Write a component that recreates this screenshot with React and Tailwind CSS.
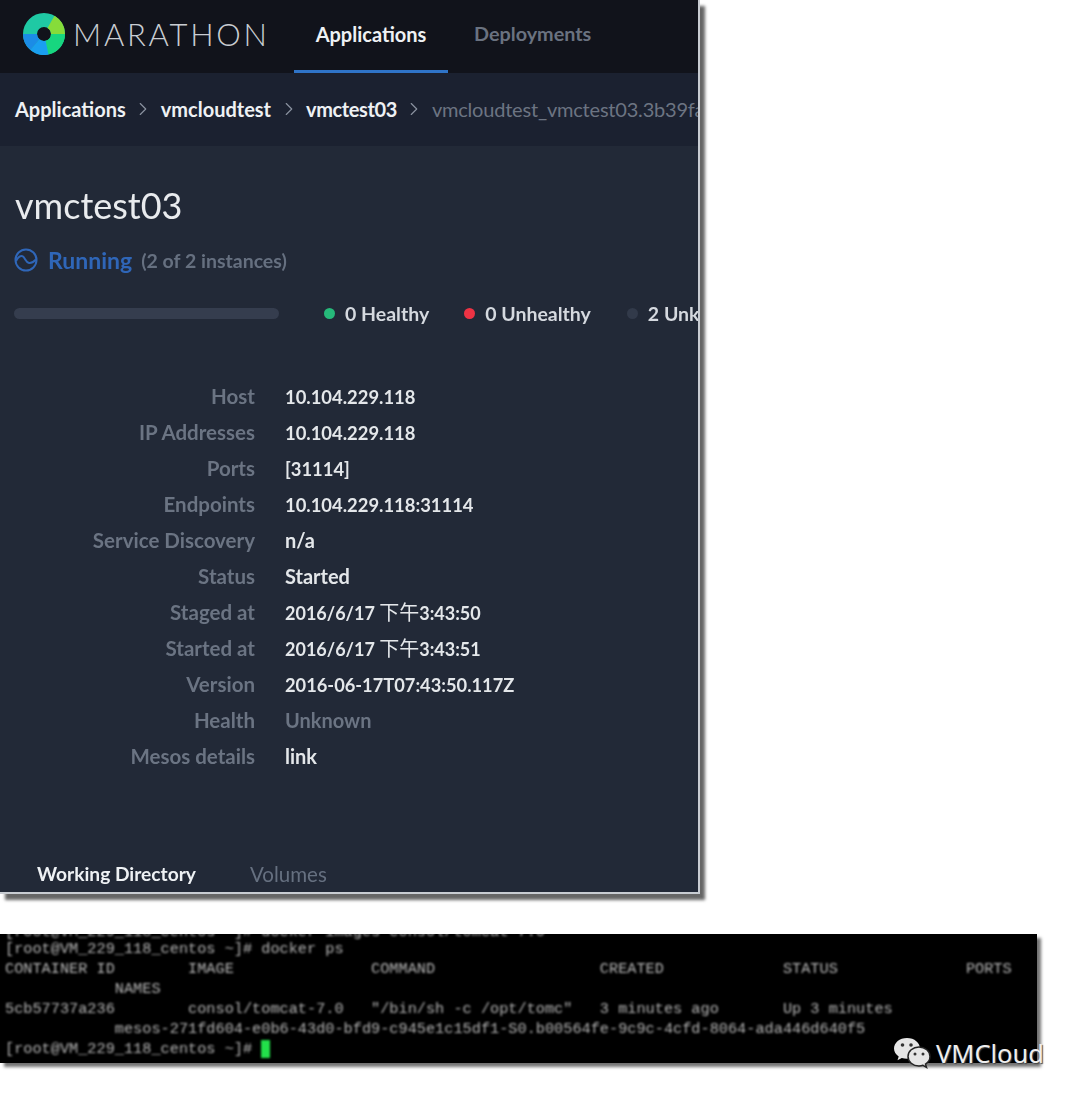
import { ChevronRight } from "lucide-react";

const sans = "font-['Lato','Noto_Sans_CJK_SC',sans-serif]";

function Stamp({ day, time }) {
  return (
    <span className="text-[18px]">
      {day} <span className="text-[20px] font-normal">下午</span>
      {time}
    </span>
  );
}

const details = [
  ["Host", <span className="text-[18.400px]">10.104.229.118</span>],
  ["IP Addresses", <span className="text-[18.400px]">10.104.229.118</span>],
  ["Ports", <span className="text-[18.400px]">[31114]</span>],
  ["Endpoints", <span className="text-[18.400px]">10.104.229.118:31114</span>],
  ["Service Discovery", "n/a"],
  ["Status", "Started"],
  ["Staged at", <Stamp day="2016/6/17" time="3:43:50" />],
  ["Started at", <Stamp day="2016/6/17" time="3:43:51" />],
  ["Version", <span className="text-[18.250px]">2016-06-17T07:43:50.117Z</span>],
  ["Health", "Unknown"],
  ["Mesos details", "link"],
];

const terminal = [
  "[root@VM_229_118_centos ~]# docker ps",
  "CONTAINER ID        IMAGE               COMMAND                  CREATED             STATUS              PORTS",
  "            NAMES",
  '5cb57737a236        consol/tomcat-7.0   "/bin/sh -c /opt/tomc"   3 minutes ago       Up 3 minutes',
  "            mesos-271fd604-e0b6-43d0-bfd9-c945e1c15df1-S0.b00564fe-9c9c-4cfd-8064-ada446d640f5",
];

function Logo() {
  return (
    <svg width="42" height="42" viewBox="0 0 42 42" fill="none" strokeWidth="14">
      <circle cx="21" cy="21" r="14" stroke="#1fc9a4" />
      <path d="M28 8.9A14 14 0 0 1 35 21" stroke="#86dc3a" />
      <path d="M35 21A14 14 0 0 1 24 34.7" stroke="#17d67f" />
      <path d="M24 34.7A14 14 0 0 1 12 31.7" stroke="#1a9ff0" />
      <path d="M12 31.7A14 14 0 0 1 7 21" stroke="#1b8ce6" />
    </svg>
  );
}

function RunningIcon() {
  return (
    <svg width="24" height="24" viewBox="0 0 24 24" fill="none" stroke="#2f66b8" strokeWidth="2">
      <circle cx="12" cy="12" r="10.5" />
      <path d="M2 13c2-4 5-6 7-4.500s3 6 6 6.500 5-1.500 7-3.500" />
    </svg>
  );
}

function WeChat() {
  return (
    <svg width="38" height="32" viewBox="0 0 38 32" fill="#e6e6e6">
      <path d="M14 1C6.500 1 1 5.800 1 11.500c0 3.300 1.800 6 4.700 8l-1.200 3.700 4.300-2.200c1.700.5 3.500.8 5.200.8 7.500 0 13-4.800 13-10.300S21.500 1 14 1z" />
      <path d="M26 10c-6.200 0-11 4.300-11 9.500S19.800 29 26 29c1.400 0 2.800-.2 4-.7l3.500 2-1-3.200c2.800-1.800 4.500-4.500 4.500-7.600C37 14.300 32.200 10 26 10z" stroke="#222" strokeWidth="1.500" />
      <circle cx="9.500" cy="8" r="1.800" fill="#333" />
      <circle cx="18" cy="8" r="1.800" fill="#333" />
      <circle cx="22" cy="17" r="1.500" fill="#333" />
      <circle cx="30" cy="17" r="1.500" fill="#333" />
    </svg>
  );
}

function Crumb({ children }) {
  return (
    <>
      <span className="font-bold text-[#eef1f4]">{children}</span>
      <ChevronRight className="mx-[6.500px] h-[22px] w-[22px] shrink-0 text-[#8b93a0]" strokeWidth={1.25} />
    </>
  );
}

function Legend({ color, children, className }) {
  return (
    <div className={`flex shrink-0 items-center gap-[10px] ${className}`}>
      <span className={`h-[11px] w-[11px] rounded-full ${color}`} />
      <span className="font-bold text-[#d5d9df]">{children}</span>
    </div>
  );
}

export default function App() {
  return (
    <div className={`relative h-[1099px] w-[1080px] overflow-hidden bg-white ${sans}`}>
      <div className="h-[894px] w-[700px] overflow-hidden border-r-2 border-b-2 border-[#c8ccd2] bg-[#222937] shadow-[5px_6px_3px_rgba(0,0,0,0.6)]">
        <div className="blur-[0.7px]">
          <nav className="flex h-[73px] items-center bg-[#11131b] pl-[23px]">
            <div className="mb-[5px] flex w-[250px] shrink-0 items-center">
              <Logo />
              <span className="ml-[8px] text-[31px] font-light tracking-[2.750px] whitespace-nowrap text-[#c9cdd2]">MARATHON</span>
            </div>
            <div className="ml-[21px] flex h-full w-[154px] items-center justify-center border-b-[3px] border-[#2f74c8] pb-[2px] text-[20px] font-bold text-[#eef1f4]">
              Applications
            </div>
            <span className="mb-[5px] ml-[26px] text-[19.800px] font-bold text-[#6a7280]">Deployments</span>
          </nav>

          <div className="flex h-[73px] items-center overflow-hidden bg-[#1b2130] pb-[2px] pl-[15px] text-[20px] whitespace-nowrap">
            <Crumb>Applications</Crumb>
            <Crumb>vmcloudtest</Crumb>
            <Crumb>
              <span className="tracking-[-0.4px]">vmctest03</span>
            </Crumb>
            <span className="tracking-[-0.2px] text-[#6c7482]">vmcloudtest_vmctest03.3b39fa1e</span>
          </div>

          <main className="flex flex-col pt-[35px]">
            <h1 className="pl-[15px] text-[36px] leading-[48px] text-[#e9ebee]">vmctest03</h1>
            <div className="mt-[14px] flex items-center pl-[14px]">
              <RunningIcon />
              <span className="ml-[10px] text-[23px] font-bold text-[#2f66b8]">Running</span>
              <span className="ml-[9px] pt-[1px] text-[19.500px] font-bold text-[#667080]">(2 of 2 instances)</span>
            </div>

            <div className="mt-[21px] flex items-center pl-[14px] text-[19.500px] whitespace-nowrap">
              <div className="h-[11px] w-[265px] shrink-0 rounded-full bg-[#353d4e]" />
              <Legend color="bg-[#26b97a]" className="ml-[45px]">0 Healthy</Legend>
              <Legend color="bg-[#ee3344]" className="ml-[35px]">0 Unhealthy</Legend>
              <Legend color="bg-[#323a4a]" className="ml-[36px]">2 Unknown</Legend>
            </div>

            <dl className="mt-[50px] grid auto-rows-[36px] grid-cols-[255px_1fr] gap-x-[30px] text-[20px] leading-[36px]">
              {details.map(([label, value]) => (
                <div key={label} className="contents">
                  <dt className="text-right text-[20.500px] font-bold text-[#6b7483]">{label}</dt>
                  <dd className={`font-bold ${label === "Health" ? "text-[#6b7483]" : "text-[#e4e7ea]"}`}>{value}</dd>
                </div>
              ))}
            </dl>

            <div className="mt-[85px] flex items-center pl-[37px]">
              <span className="text-[19.200px] font-bold text-[#eef1f4]">Working Directory</span>
              <span className="ml-[54px] text-[20.500px] text-[#667080]">Volumes</span>
            </div>
          </main>
        </div>
      </div>

      <div className="mt-[40px] flex h-[129px] w-[1037px] flex-col justify-end overflow-hidden bg-black pb-[4px] pl-[5px] font-['Liberation_Mono',monospace] text-[15.250px] leading-[20px] whitespace-pre text-[#b5b5b5] shadow-[4px_4px_3px_rgba(0,0,0,0.55)]">
        <div className="shrink-0 blur-[1px]">
          <div className="-mb-[3px]">[root@VM_229_118_centos ~]# docker images consol/tomcat-7.0</div>
          {terminal.map((line) => (
            <div key={line}>{line}</div>
          ))}
          <div className="flex h-[20px] items-center">
            <span>[root@VM_229_118_centos ~]# </span>
            <span className="h-[18px] w-[9px] bg-[#22e04a]" />
          </div>
        </div>
      </div>

      <div className="absolute top-[1036px] left-[893px] flex items-center gap-[5px]">
        <WeChat />
        <span className="font-['Noto_Sans',sans-serif] text-[25.500px] leading-[34px] text-[#eeeeee] [text-shadow:1px_1px_1px_#444]">VMCloud</span>
      </div>
    </div>
  );
}
